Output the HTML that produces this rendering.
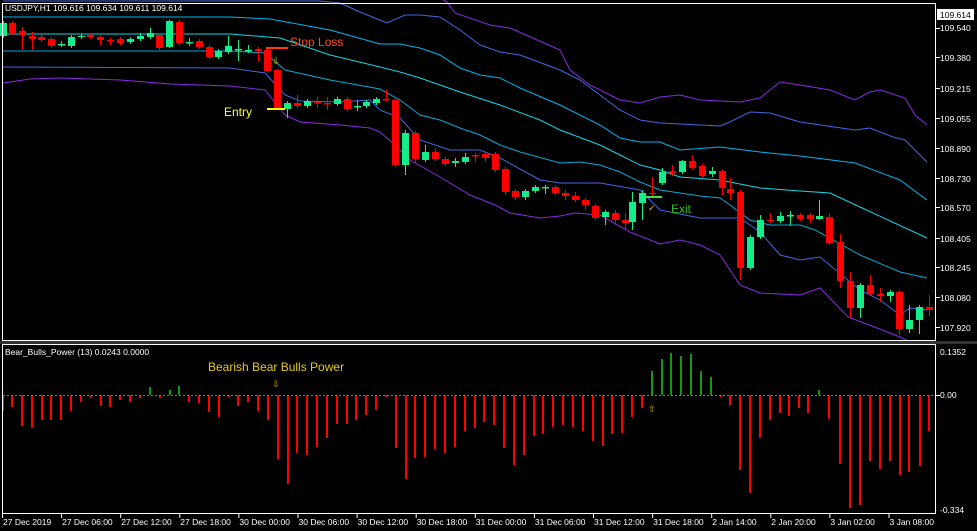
<!DOCTYPE html>
<html><head><meta charset="utf-8"><style>
html,body{margin:0;padding:0;background:#000;width:977px;height:531px;overflow:hidden}
svg{display:block}
text{font-family:"Liberation Sans",sans-serif}
</style></head><body>
<svg id="s" width="977" height="531" viewBox="0 0 977 531" xmlns="http://www.w3.org/2000/svg">
<rect width="977" height="531" fill="#000"/>
<g id="bands" fill="none" stroke-width="1"></g>
<g id="candles"></g>
<g id="bars"></g>
<line x1="3" y1="395.5" x2="935" y2="395.5" stroke="#777" stroke-dasharray="2,2"/>
<!-- frames -->
<rect x="2.5" y="3.5" width="933" height="337" fill="none" stroke="#fff"/>
<rect x="0" y="341" width="977" height="3" fill="#333"/>
<rect x="2.5" y="344.5" width="933" height="169" fill="none" stroke="#fff"/>
<g id="ticks" stroke="#fff"></g>
<!-- annotations -->
<line x1="266" y1="48" x2="288" y2="48" stroke="#ff3c00" stroke-width="2"/>
<text x="290" y="46" font-size="12" fill="#ff4a1a">Stop Loss</text>
<text x="272" y="64" font-size="9" fill="#e0b000">⇩</text>
<line x1="267" y1="109" x2="285" y2="109" stroke="#ffff00" stroke-width="2"/>
<text x="224" y="116" font-size="12" fill="#ffff33">Entry</text>
<line x1="645" y1="197" x2="662" y2="197" stroke="#44dd44" stroke-width="2"/>
<text x="648" y="211" font-size="9" fill="#d4c000">✓</text>
<text x="671" y="213" font-size="12" fill="#33bb22">Exit</text>
<text x="208" y="371" font-size="12" fill="#e8c81a">Bearish Bear Bulls Power</text>
<text x="272" y="387" font-size="9" fill="#e0b000">⇩</text>
<text x="648" y="412" font-size="9" fill="#e0b000">⇧</text>
<!-- titles -->
<text x="5" y="11" font-size="8.5" fill="#fff">USDJPY,H1  109.616 109.634 109.611 109.614</text>
<text x="5" y="355" font-size="8.5" fill="#fff">Bear_Bulls_Power (13)  0.0243 0.0000</text>
<rect x="937" y="9" width="37" height="11" fill="#fff"/>
<text x="940" y="18" font-size="8.5" fill="#000">109.614</text>
<g font-size="8.5" fill="#fff" id="ax">
<text x="940" y="31">109.540</text><text x="940" y="61">109.380</text><text x="940" y="92">109.215</text>
<text x="940" y="122">109.055</text><text x="940" y="152">108.890</text><text x="940" y="182">108.730</text>
<text x="940" y="211">108.570</text><text x="940" y="242">108.405</text><text x="940" y="271">108.245</text>
<text x="940" y="301">108.080</text><text x="940" y="331">107.920</text>
<text x="940" y="355">0.1352</text><text x="940" y="398">0.00</text><text x="940" y="513">-0.334</text>
</g>
<g font-size="8.5" fill="#fff" id="tx"></g>
</svg>
<script>
var NS="http://www.w3.org/2000/svg";
function el(p,n,a,t){var e=document.createElementNS(NS,n);for(var k in a)e.setAttribute(k,a[k]);if(t)e.textContent=t;document.getElementById(p).appendChild(e);return e;}
var bands=[
["#8a2be2",[[440,-2],[447,2],[455,13],[490,25],[510,28],[560,50],[570,70],[590,85],[620,100],[640,103],[660,97],[680,95],[700,100],[740,102],[760,98],[780,82],[800,85],[830,90],[855,100],[870,92],[880,90],[905,98],[915,115],[927,125]]],
["#4169e1",[[3,1],[320,1],[340,3],[360,12],[387,23],[405,15],[420,15],[440,17],[460,30],[480,45],[500,52],[520,55],[560,70],[580,80],[600,95],[620,110],[640,120],[660,123],[720,126],[730,122],[750,112],[770,113],[800,122],[855,130],[870,128],[893,137],[905,140],[927,162]]],
["#00b4f0",[[3,17],[230,17],[270,19],[330,30],[380,44],[400,44],[420,48],[440,55],[460,68],[480,75],[500,78],[520,88],[560,105],[600,125],[620,138],[640,142],[660,142],[680,150],[720,147],[760,152],[800,156],[855,163],[900,180],[927,200]]],
["#10d8e8",[[3,34],[230,34],[280,38],[330,55],[380,67],[400,72],[420,78],[440,85],[460,92],[500,105],[540,120],[560,130],[600,145],[620,155],[640,165],[660,170],[680,177],[720,180],[760,188],[800,191],[830,193],[860,207],[927,238]]],
["#0aa8d8",[[3,51],[230,51],[265,53],[285,70],[330,80],[380,89],[400,100],[420,115],[440,120],[460,128],[480,135],[500,145],[520,152],[560,163],[580,162],[600,165],[620,172],[640,182],[660,190],[700,196],[720,198],[730,205],[750,220],[770,225],[800,225],[815,230],[860,255],[900,272],[927,278]]],
["#4169e1",[[3,67],[230,68],[265,73],[285,95],[300,101],[340,102],[370,100],[380,110],[400,118],[420,140],[450,150],[480,150],[500,158],[540,180],[560,183],[600,183],[640,190],[660,210],[700,218],[740,218],[760,232],[780,255],[800,260],[820,257],[860,290],[880,300],[900,315],[910,308],[927,310]]],
["#8a2be2",[[3,83],[30,79],[60,78],[120,80],[170,84],[230,86],[265,90],[285,115],[300,122],[340,125],[370,128],[380,132],[395,145],[410,160],[440,177],[470,195],[495,205],[510,213],[540,218],[560,216],[575,213],[600,215],[630,232],[660,244],[680,240],[700,245],[720,255],[740,285],[760,293],[800,295],[820,288],[848,317],[877,328],[900,337],[910,342]]]
];
bands.forEach(function(b){el("bands","polyline",{points:b[1].map(function(p){return p.join(",")}).join(" "),stroke:b[0]});});
// candles: x, top, bottom, wickTop, wickBot, color
var C=[[3,23,36,0,0,1],[12,23,33,0,0,0],[22,31,35,27,50,0],[32,36,39,32,50,0],[41,37,40,35,42,0],[51,39,46,0,0,0],[61,44,44,41,47,1],[71,37,46,0,0,1],[81,36,37,34,39,1],[90,35,37,34,39,0],[100,37,40,35,45,0],[110,40,40,38,45,0],[120,39,43,37,45,0],[130,39,42,37,44,1],[140,36,39,33,41,1],[150,33,37,28,39,1],[159,35,48,0,0,0],[169,21,47,20,48,1],[179,22,43,20,45,0],[189,42,42,38,46,1],[199,41,47,0,0,0],[209,47,57,45,59,0],[218,51,57,49,59,1],[228,46,52,36,54,1],[238,49,49,40,61,1],[248,50,50,45,53,1],[258,49,51,47,62,0],[267,50,71,0,0,0],[277,70,109,69,110,0],[287,103,109,101,118,1],[297,103,106,95,108,0],[307,101,106,0,0,1],[317,102,103,97,108,0],[327,103,103,97,110,0],[337,99,104,0,0,1],[347,99,109,0,0,0],[357,106,106,100,111,1],[366,102,106,0,0,1],[376,99,103,0,0,1],[386,99,99,90,101,0],
[395,100,165,97,167,0],[405,133,165,130,175,1],[415,133,159,131,163,0],[425,152,160,145,162,1],[435,152,159,148,161,0],[445,159,164,0,0,0],[455,161,163,158,167,1],[465,157,162,153,164,1],[475,155,155,153,162,0],[485,154,158,153,162,0],[495,154,170,152,172,0],[505,169,192,0,195,0],[515,191,197,189,200,0],[525,191,197,189,200,1],[535,187,191,185,193,1],[545,187,187,185,194,1],[555,187,193,0,0,0],[565,193,196,190,200,0],[575,196,200,192,202,0],[585,200,205,198,210,0],[595,206,218,204,220,0],[605,212,217,210,225,1],[615,213,220,210,225,0],[625,220,223,213,230,0],[632,202,222,192,230,1],[642,193,203,190,220,1],[652,193,194,177,196,0],[662,172,183,168,185,1],[672,171,173,165,176,0],[682,161,172,160,174,1],[692,161,168,155,170,0],[702,166,176,0,0,0],[712,171,174,167,177,1],[722,171,188,169,195,0],[730,189,193,178,200,0],[740,192,268,190,280,0],[750,237,268,235,270,1],[760,220,237,215,239,1],[770,220,221,213,223,0],[780,216,221,212,223,1],[790,215,215,211,226,1],[800,215,219,213,221,0],[810,215,219,213,223,0],[819,216,219,200,220,1],[829,217,243,213,245,0],[840,242,281,234,288,0],[850,281,308,272,318,0],[860,285,308,283,318,1],[870,285,294,275,296,0],[880,294,296,288,302,0],[890,292,296,290,302,1],[899,292,329,290,335,0],[909,320,329,305,333,1],[919,307,320,305,334,1],[929,307,310,295,316,0]];
C.forEach(function(c){var col=c[5]?"#14ee8a":"#ff0000";var wt=c[3]||c[1]-2,wb=c[4]||c[2]+2;
el("candles","line",{x1:c[0]+.5,x2:c[0]+.5,y1:wt,y2:wb,stroke:col});
var h=c[2]-c[1];if(h<1){el("candles","rect",{x:c[0]-3,y:c[1],width:7,height:1.5,fill:col});}else el("candles","rect",{x:c[0]-3,y:c[1],width:7,height:h,fill:col});});
// indicator bars: x, yEnd
var B=[[3,411],[12,407],[22,426],[32,428],[42,420],[51,420],[61,420],[71,411],[81,402],[91,398],[101,406],[110,407],[120,400],[130,402],[140,398],[150,387],[160,398],[170,390],[179,386],[189,402],[199,403],[209,412],[219,417],[229,397],[238,406],[248,402],[258,411],[268,420],[278,459],[288,484],[297,453],[307,455],[317,447],[327,438],[337,424],[347,424],[356,420],[366,415],[376,410],[386,397],[396,448],[406,479],[415,458],[425,457],[435,449],[445,453],[455,447],[465,431],[475,428],[484,422],[494,425],[504,448],[514,465],[524,455],[534,436],[543,434],[553,427],[563,425],[573,427],[583,431],[593,441],[603,446],[612,434],[622,433],[632,417],[642,408],[652,371],[662,359],[671,353],[681,356],[691,354],[701,371],[711,377],[721,397],[730,405],[740,470],[750,493],[760,438],[770,420],[780,413],[789,416],[799,408],[808,413],[819,390],[829,419],[840,464],[850,508],[860,505],[870,461],[880,469],[890,461],[900,475],[909,472],[920,466],[929,431]];
B.forEach(function(b){var up=b[1]<395;var green=up&&(b[0]>=645&&b[0]<=715||b[0]==150||b[0]==170||b[0]==179||b[0]==819);
el("bars","rect",{x:b[0]-1,y:up?b[1]:395,width:2,height:Math.abs(b[1]-395)||1,fill:green?"#119a11":"#ff0000"});});
// time axis
var T=["27 Dec 2019","27 Dec 06:00","27 Dec 12:00","27 Dec 18:00","30 Dec 00:00","30 Dec 06:00","30 Dec 12:00","30 Dec 18:00","31 Dec 00:00","31 Dec 06:00","31 Dec 12:00","31 Dec 18:00","2 Jan 14:00","2 Jan 20:00","3 Jan 02:00","3 Jan 08:00"];
T.forEach(function(t,i){var x=2+i*59.1;el("tx","text",{x:x+1,y:525},t);el("ticks","line",{x1:x+0.5,x2:x+0.5,y1:514,y2:518});});
[28,57,88,118,148,178,207,238,267,297,327,395].forEach(function(y){el("ticks","line",{x1:936,x2:940,y1:y+.5,y2:y+.5});});
</script>
</body></html>
